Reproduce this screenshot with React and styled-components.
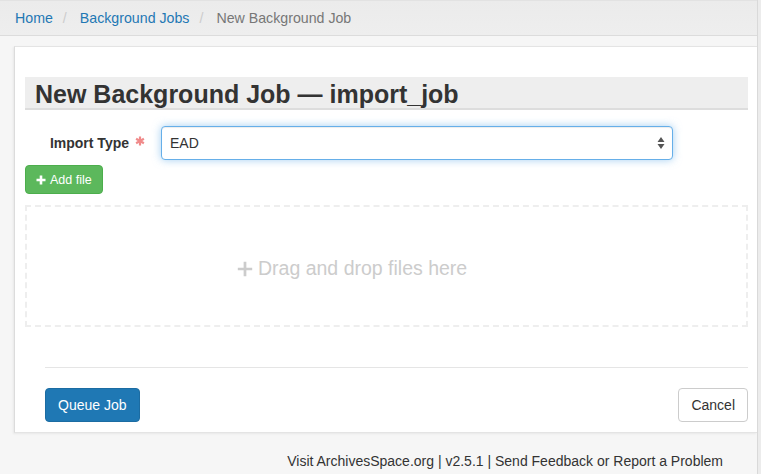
import React from "react";
import styled, { createGlobalStyle } from "styled-components";

const GlobalStyle = createGlobalStyle`
  html, body {
    margin: 0;
    padding: 0;
    background: #f6f6f6;
    font-family: "Liberation Sans", Arial, sans-serif;
    font-size: 14px;
    color: #333;
  }
`;

const Shell = styled.div`
  display: flex;
  min-height: 474px;
`;

const Main = styled.div`
  flex: 1;
  min-width: 0;
`;

const Gutter = styled.div`
  width: 3px;
  background: #ececec;
  border-left: 1px solid #d9d9d9;
`;

const Breadcrumb = styled.ol`
  display: flex;
  align-items: center;
  height: 36px;
  margin: 0;
  padding: 0 15px;
  list-style: none;
  background: linear-gradient(#ebebeb, #eeeeee);
  border-top: 1px solid #e2e2e2;
  border-bottom: 1px solid #dcdcdc;
  box-sizing: border-box;
  font-size: 14.2px;
  li {
    display: flex;
    align-items: center;
  }
  li + li::before {
    content: "/";
    color: #ccc;
    padding: 0 13px 0 10px;
  }
  a {
    color: #1f78b4;
    text-decoration: none;
  }
  .active {
    color: #777;
  }
`;

const Panel = styled.div`
  margin: 10px 0 0 14px;
  background: #fff;
  border-left: 1px solid #dcdcdc;
  border-top: 1px solid #e4e4e4;
  border-bottom: 1px solid #e4e4e4;
  box-shadow: -1px 1px 2px rgba(0, 0, 0, 0.06);
  padding: 30px 9px 10px 10px;
`;

const Heading = styled.h2`
  margin: 0;
  height: 33px;
  line-height: 34px;
  padding: 0 10px;
  background: #eeeeee;
  border-bottom: 2px solid #dddddd;
  box-sizing: border-box;
  font-size: 25px;
  font-weight: bold;
  color: #333;
`;

const FormRow = styled.div`
  display: grid;
  grid-template-columns: 136px 512px;
  align-items: center;
  margin-top: 16px;
`;

const Label = styled.label`
  display: flex;
  justify-content: flex-end;
  align-items: center;
  gap: 6px;
  padding-right: 16px;
  font-weight: bold;
  font-size: 14px;
  color: #333;
`;

const Required = styled.span`
  display: inline-flex;
  color: #f08a8a;
  position: relative;
  top: -2px;
`;

const SelectBox = styled.div`
  display: flex;
  align-items: center;
  justify-content: space-between;
  height: 34px;
  padding: 0 7px 0 8px;
  box-sizing: border-box;
  border: 1px solid #66afe9;
  border-radius: 4px;
  box-shadow: inset 0 1px 1px rgba(0, 0, 0, 0.075), 0 0 8px rgba(102, 175, 233, 0.6);
  font-size: 14px;
  color: #333;
  background: #fff;
`;

const Button = styled.button`
  display: inline-flex;
  align-items: center;
  justify-content: center;
  gap: 4px;
  box-sizing: border-box;
  font-family: inherit;
  border-radius: 4px;
  border: 1px solid ${p => p.$border};
  background: ${p => p.$bg};
  color: ${p => p.$color};
  font-size: ${p => (p.$small ? "12.5px" : "14px")};
  height: ${p => (p.$small ? "29px" : "34px")};
  padding: ${p => (p.$small ? "0 10px" : "0 12px")};
  cursor: pointer;
`;

const AddRow = styled.div`
  margin-top: 5px;
`;

const DropZone = styled.div`
  margin-top: 11px;
  height: 122px;
  box-sizing: border-box;
  border: 2px dashed #eeeeee;
  display: flex;
  align-items: center;
  padding-left: 210px;
  padding-top: 5px;
  color: #cccccc;
  font-size: 19.5px;
  gap: 5px;
`;

const Actions = styled.div`
  margin: 40px 0 0 20px;
  border-top: 1px solid #e5e5e5;
  padding-top: 20px;
  display: flex;
  justify-content: space-between;
`;

const Footer = styled.footer`
  text-align: right;
  padding: 20px 34px 0 0;
  font-size: 14px;
  color: #333;
`;

const Plus = ({ size = 10, weight = 2.6 }) => (
  <svg width={size} height={size} viewBox="0 0 10 10">
    <path d="M5 0.5V9.5M0.5 5H9.5" stroke="currentColor" strokeWidth={weight} />
  </svg>
);

const Asterisk = () => (
  <svg width="10" height="10" viewBox="0 0 10 10">
    <path
      d="M5 0.5V9.5M1.1 2.75L8.9 7.25M1.1 7.25L8.9 2.75"
      stroke="currentColor"
      strokeWidth="2.2"
    />
  </svg>
);

const SortArrows = () => (
  <svg width="8" height="14" viewBox="0 0 8 14">
    <path d="M4 1L7.5 6H0.5Z M4 13L0.5 8H7.5Z" fill="#555" />
  </svg>
);

export default function App() {
  return (
    <>
      <GlobalStyle />
      <Shell>
        <Main>
          <Breadcrumb>
            <li><a href="#">Home</a></li>
            <li><a href="#">Background Jobs</a></li>
            <li className="active">New Background Job</li>
          </Breadcrumb>
          <Panel>
            <Heading>New Background Job — import_job</Heading>
            <FormRow>
              <Label>
                Import Type <Required><Asterisk /></Required>
              </Label>
              <SelectBox>
                <span>EAD</span>
                <SortArrows />
              </SelectBox>
            </FormRow>
            <AddRow>
              <Button $small $bg="#5cb85c" $border="#4cae4c" $color="#fff">
                <Plus size={10} weight={2.6} /> Add file
              </Button>
            </AddRow>
            <DropZone>
              <Plus size={16} weight={1.7} />
              <span>Drag and drop files here</span>
            </DropZone>
            <Actions>
              <Button $bg="#1f78b4" $border="#1c6ca2" $color="#fff">Queue Job</Button>
              <Button $bg="#fff" $border="#ccc" $color="#333">Cancel</Button>
            </Actions>
          </Panel>
          <Footer>
            Visit ArchivesSpace.org | v2.5.1 | Send Feedback or Report a Problem
          </Footer>
        </Main>
        <Gutter />
      </Shell>
    </>
  );
}
